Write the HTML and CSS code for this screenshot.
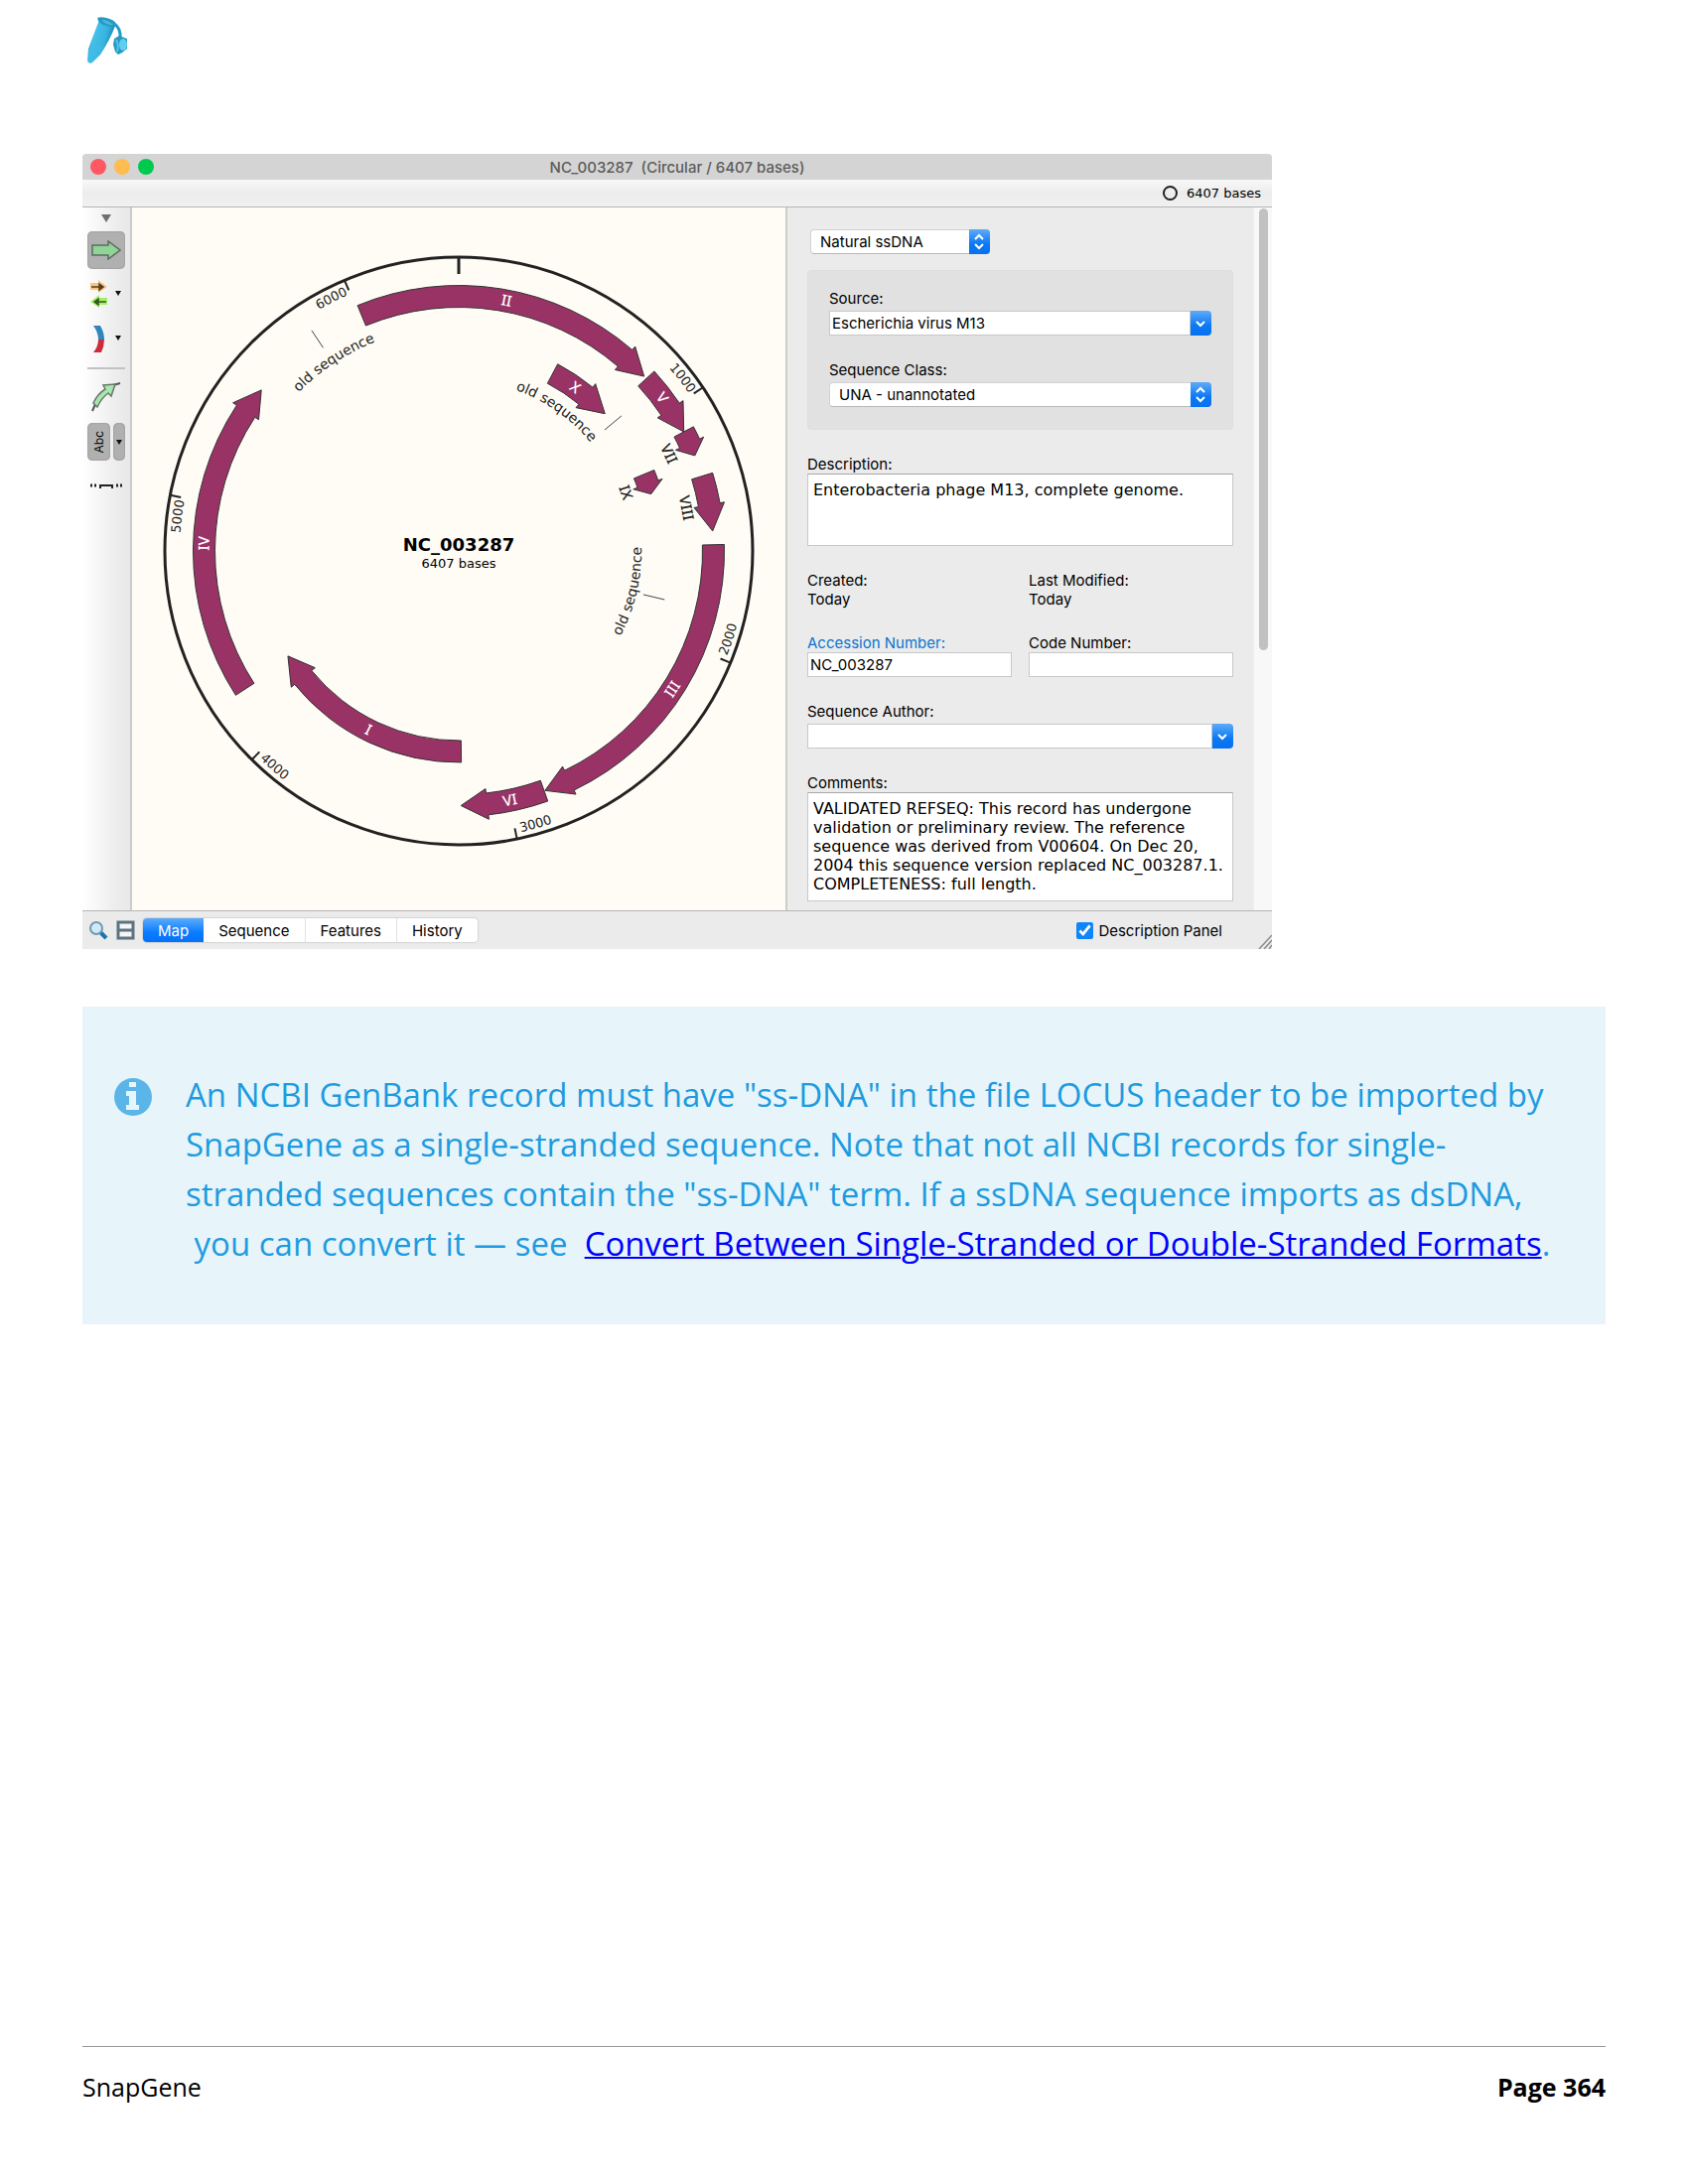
FILE: index.html
```html
<!DOCTYPE html>
<html lang="en">
<head>
<meta charset="utf-8">
<title>SnapGene</title>
<link rel="stylesheet" href="styles.css">
</head>
<body>
<header class="page-head">
  <svg class="logo" width="44" height="50" viewBox="0 0 44 50" aria-hidden="true">
    <defs>
      <linearGradient id="tube" x1="0" y1="0" x2="1" y2="0.4">
        <stop offset="0" stop-color="#1b86ac"/><stop offset="0.35" stop-color="#45c0e8"/><stop offset="0.7" stop-color="#35b2df"/><stop offset="1" stop-color="#167ca3"/>
      </linearGradient>
    </defs>
    <path d="M13 4 L2 33 L1 45 Q2 49 6 47 L14 39 Q24 24 29 10 Z" fill="url(#tube)"/>
    <path d="M4 31 Q9 27 18 31 L14 39 L5 47 Q1 48 2 43 Z" fill="#41bbe4" opacity=".6"/>
    <path d="M11 2 Q17 0 26 4 Q31 7 30 10 Q27 12 20 10 Q12 8 11 2 Z" fill="#2699c0"/>
    <path d="M15 4 Q22 4 27 9 Q20 10 15 4 Z" fill="#43b9e0"/>
    <path d="M28 8 Q35 12 34 23" fill="none" stroke="#239cc6" stroke-width="3"/>
    <path d="M28 23 L33 20 L41 23 V33 L36 37 L32 39 L29 36 L27 29 Z" fill="#259bc4"/>
    <ellipse cx="37" cy="29" rx="4" ry="6" fill="#62cdef"/>
    <path d="M30 24 Q33 30 31 36" fill="none" stroke="#52c4ea" stroke-width="2"/>
  </svg>
</header>

<main class="content">
  <section class="window" aria-label="NC_003287">
    <div class="titlebar">
      <span class="lights"><i class="light red"></i><i class="light amber"></i><i class="light green"></i></span>
      <span class="title">NC_003287&nbsp; (Circular / 6407 bases)</span>
    </div>
    <div class="infobar"><i class="ring"></i><span>6407 bases</span></div>

    <div class="workspace">
      <nav class="tools" aria-label="Map tools">
        <svg class="tools-more" width="10" height="8" viewBox="0 0 10 8"><path d="M0 0H10L5 8Z" fill="#707070"/></svg>
        <button class="tool on" type="button" aria-label="Show features">
          <svg width="30" height="20" viewBox="0 0 30 20"><path d="M1 5H17V1L29 10L17 19V15H1Z" fill="#8fd596" stroke="#5f6a60" stroke-width="1.5"/></svg>
        </button>
        <button class="tool" type="button" aria-label="Show primers">
          <svg width="32" height="30" viewBox="0 0 32 30">
            <path d="M0 3H8V0L17 7L8 13V10H0Z" fill="#fbc47c"/><path d="M1 7H10M9 4L13 7L9 10Z" stroke="#51411f" stroke-width="1.5" fill="#51411f"/>
            <path d="M17 18H9V15L0 22L9 28V25H17Z" fill="#a4f06a"/><path d="M16 22H8M8 19L4 22L8 25Z" stroke="#345a1d" stroke-width="1.5" fill="#345a1d"/>
            <path d="M25 11H31L28 16Z" fill="#111"/>
          </svg>
        </button>
        <button class="tool" type="button" aria-label="Show translations">
          <svg width="32" height="30" viewBox="0 0 32 30">
            <path d="M3 1H10Q14 8 14 15H8Q8 8 3 1Z" fill="#3187bd"/><path d="M14 15Q14 22 11 28H3Q8 22 8 15Z" fill="#cb2d3b"/>
            <path d="M25 11H31L28 16Z" fill="#111"/>
          </svg>
        </button>
        <hr class="tools-line">
        <button class="tool" type="button" aria-label="Show locations">
          <svg width="30" height="30" viewBox="0 0 30 30"><path d="M1 29L4 22M22 3L29 1" stroke="#555" stroke-width="2"/><path d="M2 21Q6 12 14 7L12 3L24 2L20 14L17 11Q10 16 6 25Z" fill="#a9e6ad" stroke="#6a776b" stroke-width="1.5"/></svg>
        </button>
        <div class="tool-pair">
          <button class="tool on label-tool" type="button"><span>Abc</span></button>
          <button class="tool on drop-tool" type="button" aria-label="Label options"><svg width="6" height="5" viewBox="0 0 6 5"><path d="M0 0H6L3 5Z" fill="#111"/></svg></button>
        </div>
        <button class="tool" type="button" aria-label="Fold">
          <svg width="32" height="6" viewBox="0 0 32 6"><path d="M0 2H2M4 2H6M26 2H28M30 2H32" stroke="#222" stroke-width="3"/><path d="M10 5V2H22V5" fill="none" stroke="#222" stroke-width="2"/></svg>
        </button>
      </nav>

      <div class="map">
        <svg id="plasmid" viewBox="-329 -346 658 708" role="img" aria-label="Circular map of NC_003287">
          <circle class="backbone" r="296"/>
          <line class="origin" x1="0" y1="-296" x2="0" y2="-279"/>
          <text class="map-name" x="0" y="0">NC_003287</text>
          <text class="map-size" x="0" y="17">6407 bases</text>
        </svg>
      </div>

      <div class="panel">
        <form class="fields">
          <span class="picker kind">
            <select aria-label="Molecule type"><option>Natural ssDNA</option></select>
            <svg class="cap" viewBox="0 0 21 25"><path d="M6 10L10 6L14 10M6 15L10 19L14 15"/></svg>
          </span>

          <div class="group">
            <div class="field spaced">
              <label for="source">Source:</label>
              <span class="combo"><input id="source" type="text" value="Escherichia virus M13"><button class="cap" type="button" aria-label="Choose source"><svg viewBox="0 0 21 25"><path d="M6 11L10 15L14 11"/></svg></button></span>
            </div>
            <div class="field spaced">
              <label for="class">Sequence Class:</label>
              <span class="picker">
                <select id="class"><option>UNA - unannotated</option></select>
                <svg class="cap" viewBox="0 0 21 25"><path d="M6 10L10 6L14 10M6 15L10 19L14 15"/></svg>
              </span>
            </div>
          </div>

          <div class="field">
            <label for="description">Description:</label>
            <textarea id="description" class="short">Enterobacteria phage M13, complete genome.</textarea>
          </div>

          <div class="pair">
            <div class="field"><span>Created:</span><span>Today</span></div>
            <div class="field"><span>Last Modified:</span><span>Today</span></div>
          </div>

          <div class="pair">
            <div class="field"><label class="linked" for="accession">Accession Number:</label><input id="accession" type="text" value="NC_003287"></div>
            <div class="field"><label for="code">Code Number:</label><input id="code" type="text"></div>
          </div>

          <div class="field spaced">
            <label for="author">Sequence Author:</label>
            <span class="combo"><input id="author" type="text"><button class="cap" type="button" aria-label="Choose author"><svg viewBox="0 0 21 25"><path d="M6 11L10 15L14 11"/></svg></button></span>
          </div>

          <div class="field">
            <label for="comments">Comments:</label>
            <textarea id="comments" class="tall">VALIDATED REFSEQ: This record has undergone
validation or preliminary review. The reference
sequence was derived from V00604. On Dec 20,
2004 this sequence version replaced NC_003287.1.
COMPLETENESS: full length.</textarea>
          </div>
        </form>
        <div class="scroll"><i class="thumb"></i></div>
      </div>
    </div>

    <div class="statusbar">
      <svg width="19" height="20" viewBox="0 0 19 20" aria-hidden="true"><path d="M11 12L17 18" stroke="#1a75ae" stroke-width="4"/><circle cx="7" cy="8" r="6" fill="#cfe9fa" stroke="#7398ae" stroke-width="2"/></svg>
      <svg width="19" height="20" viewBox="0 0 19 20" aria-hidden="true"><path d="M2 2H17V18H2ZM2 10H17" fill="#f4f6f7" stroke="#5d7380" stroke-width="3"/></svg>
      <div class="tabs">
        <button class="tab current" type="button">Map</button><button class="tab" type="button">Sequence</button><button class="tab" type="button">Features</button><button class="tab" type="button">History</button>
      </div>
      <label class="toggle"><input type="checkbox" checked>Description Panel</label>
      <svg class="grip" width="14" height="15" viewBox="0 0 14 15" aria-hidden="true"><path d="M1 15L14 1M6 15L14 6M11 15L14 11" stroke="#8d8d8d" stroke-width="1.5"/></svg>
    </div>
  </section>

  <aside class="note">
    <svg class="note-icon" width="38" height="38" viewBox="0 0 38 38" aria-hidden="true"><circle cx="19" cy="19" r="19" fill="#5bb5e9"/><path d="M15 4H22V9H15ZM12 13H22V27H25V32H12V27H15V18H12Z" fill="#e7f5fa"/></svg>
    <p>An NCBI GenBank record must have "ss-DNA" in the file LOCUS header to be imported by SnapGene as a single-stranded sequence. Note that not all NCBI records for single-stranded sequences contain the "ss-DNA" term. If a ssDNA sequence imports as dsDNA, &nbsp;you can convert it — see &nbsp;<a href="#formats">Convert Between Single-Stranded or Double-Stranded Formats</a>.</p>
  </aside>
</main>

<footer class="page-foot"><span>SnapGene</span><strong>Page 364</strong></footer>
<script src="map.js"></script>
</body>
</html>
```
FILE: styles.css
```css
* { box-sizing: border-box; }

body {
  margin: 0;
  min-height: 100vh;
  padding: 0 83px;
  display: flex;
  flex-direction: column;
  background: #fff;
  color: #000;
  font-family: "Open Sans", sans-serif;
}

.page-head { height: 155px; padding: 16px 4px; }
.logo { display: block; }
.content { flex: 1; }

/* application window */
.window {
  width: 100%;
  max-width: 1198px;
  background: #ebebeb;
  border-radius: 4px 4px 0 0;
  overflow: hidden;
  font: 15px/19px Inter, sans-serif;
}
.window button, .window input, .window select, .window textarea { font: inherit; color: inherit; margin: 0; }

.titlebar {
  display: grid;
  grid-template-columns: 1fr auto 1fr;
  align-items: center;
  height: 26px;
  padding: 0 8px;
  background: #d4d4d4;
  color: #5c5c5c;
  font-weight: 500;
}
.lights { display: flex; gap: 8px; }
.light { width: 16px; height: 16px; border-radius: 50%; }
.red { background: #ff5864; }
.amber { background: #ffbc50; }
.green { background: #00ca4e; }

.infobar {
  display: flex;
  align-items: center;
  justify-content: flex-end;
  gap: 9px;
  height: 28px;
  padding: 0 11px;
  border-bottom: 1px solid #b5b5b5;
  background: linear-gradient(#f9f9f9, #ececec 50%, #f1f1f1);
  font: 13px/19px "DejaVu Sans", sans-serif;
}
.ring { width: 15px; height: 15px; border: 2px solid #222; border-radius: 50%; }

.workspace { display: flex; }

.tools {
  flex: none;
  width: 50px;
  padding: 7px 5px;
  display: flex;
  flex-direction: column;
  align-items: center;
  gap: 7px;
  border-right: 2px solid #ccc;
  background: linear-gradient(90deg, #fff, #ededed 70%, #e8e8e8);
}
.tools-more { margin-bottom: 2px; }
.tool {
  width: 38px;
  height: 38px;
  padding: 0;
  display: flex;
  align-items: center;
  justify-content: center;
  border: 0;
  border-radius: 5px;
  background: none;
}
.tool.on { background: #b0b0b0; box-shadow: inset 0 0 2px #888; }
.tool-pair { display: flex; gap: 3px; }
.tool.label-tool { width: 23px; font-size: 12px; }
.label-tool span { writing-mode: vertical-rl; transform: rotate(180deg); }
.tool.drop-tool { width: 12px; }
.tools-line { width: 38px; height: 2px; margin: 2px 0; border: 0; background: #c2c2c2; }

.map { flex: 1; min-width: 0; display: flex; background: #fffcf5; }
.map svg { width: 100%; height: auto; font-family: "DejaVu Sans", sans-serif; }
.backbone { fill: none; stroke: #222; stroke-width: 3; }
.origin { stroke: #222; stroke-width: 3; }
.tick { stroke: #222; stroke-width: 2; }
.pointer { stroke: #444; stroke-width: 1; }
.feature { fill: #993366; stroke: #333; stroke-width: 1; }
.tick-label { font-size: 13px; fill: #222; }
.site-label { font-size: 14px; fill: #222; }
.numeral { font: 500 15px "Noto Sans", sans-serif; text-anchor: middle; fill: #222; }
.numeral.light-text { fill: #fff; }
.map-name { font-size: 18px; font-weight: 700; text-anchor: middle; }
.map-size { font-size: 13px; text-anchor: middle; }

.panel { flex: 0 0 490px; display: flex; border-left: 2px solid #ccc; }
.fields {
  flex: 1;
  min-width: 0;
  padding: 22px 20px 9px 20px;
  display: flex;
  flex-direction: column;
  gap: 25px;
}
.field { display: flex; flex-direction: column; }
.field.spaced { gap: 3px; }
.linked { color: #0a74d0; }
.group {
  margin-top: -9px;
  padding: 18px 21px 22px;
  display: flex;
  flex-direction: column;
  gap: 25px;
  border: 1px solid #dedede;
  border-radius: 4px;
  background: #e1e1e1;
}
.pair { display: grid; grid-template-columns: 1fr 1fr; gap: 17px; }

.fields input, .fields textarea {
  width: 100%;
  border: 1px solid #c8c8c8;
  border-radius: 0;
  background: #fff;
}
.fields input { height: 25px; padding: 0 2px; }
.fields textarea {
  display: block;
  padding: 6px 5px;
  border-top-color: #a8a8a8;
  resize: none;
  overflow: hidden;
  white-space: pre-wrap;
  font: 16px/19px "DejaVu Sans", sans-serif;
}
.fields .short { height: 73px; }
.fields .tall { height: 110px; }

.picker { display: grid; grid-template-columns: 1fr 21px; }
.picker.kind { width: 181px; margin-left: 3px; }
.picker select {
  grid-area: 1 / 1 / 2 / 3;
  height: 25px;
  padding: 0 9px;
  appearance: none;
  border: 1px solid #d2d2d2;
  border-bottom-color: #b8b8b8;
  border-radius: 4px;
  background: #fff;
}
.picker .cap { grid-area: 1 / 2; pointer-events: none; }
.combo { display: flex; }
.cap {
  flex: none;
  width: 21px;
  height: 25px;
  padding: 0;
  border: 0;
  border-radius: 0 4px 4px 0;
  background: linear-gradient(#5fabf7, #0a78f5 60%, #0870ee);
}
.cap svg { display: block; }
.cap path { fill: none; stroke: #fff; stroke-width: 2; }

.scroll { flex: none; width: 19px; padding: 1px 5px; background: #f8f8f8; border-left: 1px solid #efefef; }
.thumb { display: block; width: 9px; height: 63%; border-radius: 5px; background: #c1c1c1; }

.statusbar {
  display: flex;
  align-items: center;
  gap: 8px;
  height: 39px;
  padding-left: 7px;
  border-top: 1px solid #b5b5b5;
}
.tabs { display: flex; border-radius: 4px; box-shadow: 0 0 1px 1px #d4d4d4; background: #fff; }
.tab { height: 24px; padding: 0 15px; border: 0; border-right: 1px solid #e2e2e2; background: none; }
.tab:last-child { border: 0; }
.tab.current { border: 0; border-radius: 4px 0 0 4px; background: linear-gradient(#5cabfa, #0a7bff 60%, #0572f8); }
.window .tab.current { color: #fff; }
.toggle { display: flex; align-items: center; gap: 5px; margin-left: auto; margin-right: 28px; }
.toggle input {
  width: 17px;
  height: 17px;
  accent-color: #0f85f8;
}
.grip { align-self: flex-end; }

/* note below the figure */
.note {
  display: flex;
  gap: 34px;
  margin-top: 58px;
  padding: 64px 32px 56px;
  background: #e7f5fa;
  color: #1e9be0;
  font-size: 33px;
  line-height: 50px;
}
.note-icon { flex: none; margin-top: 8px; }
.note p { margin: 0; }
.note a { color: #00f; text-decoration-thickness: 2px; }

.page-foot {
  display: flex;
  justify-content: space-between;
  height: 139px;
  padding-top: 23px;
  border-top: 1px solid #999;
  font-size: 25px;
  line-height: 34px;
}
```
FILE: map.js
```js
// Draws the circular map: features, scale ticks and curved labels.
// Angles are in degrees, clockwise from the top of the circle.
(function () {
  var svg = document.getElementById('plasmid');
  var NS = 'http://www.w3.org/2000/svg';
  var LENGTH = 6407, OUTER = 256.5, INNER = 202;

  function pt(r, deg) {
    var a = deg * Math.PI / 180;
    return (r * Math.sin(a)).toFixed(2) + ' ' + (-r * Math.cos(a)).toFixed(2);
  }
  function add(name, attrs, text) {
    var el = document.createElementNS(NS, name);
    for (var k in attrs) el.setAttribute(k, attrs[k]);
    if (text) el.textContent = text;
    svg.appendChild(el);
    return el;
  }
  function arc(r, to, sweep) { return 'A' + r + ' ' + r + ' 0 0 ' + sweep + ' ' + pt(r, to); }

  function feature(r, from, to) {
    var head = Math.min(26.5 / r * 57.3, (to - from) / 2);
    var neck = to - head;
    add('path', { 'class': 'feature', d:
      'M' + pt(r + 11, from) + arc(r + 11, neck, 1) + 'L' + pt(r + 15.5, neck) +
      'L' + pt(r, to) + 'L' + pt(r - 15.5, neck) + 'L' + pt(r - 11, neck) +
      arc(r - 11, from, 0) + 'Z' });
  }
  function numeral(text, r, deg, inside) {
    var flip = deg > 90 && deg < 270;
    add('text', {
      'class': 'numeral' + (inside ? ' light-text' : ''),
      y: 5,
      transform: 'translate(' + pt(r, deg).replace(' ', ',') + ') rotate(' + (flip ? deg + 180 : deg) + ')'
    }, text);
  }
  var count = 0;
  function curved(text, cls, r, from, to, anchor) {
    var id = 'arc' + (++count);
    add('path', { id: id, fill: 'none', d: 'M' + pt(r, from) + arc(r, to, to > from ? 1 : 0) });
    var t = add('text', { 'class': cls, 'text-anchor': anchor });
    var p = document.createElementNS(NS, 'textPath');
    p.setAttribute('href', '#' + id);
    p.setAttribute('startOffset', { start: '0%', middle: '50%', end: '100%' }[anchor]);
    p.textContent = text;
    t.appendChild(p);
  }
  function radial(cls, r1, r2, deg) {
    add('path', { 'class': cls, d: 'M' + pt(r1, deg) + 'L' + pt(r2, deg) });
  }

  [
    ['II', OUTER, -22.4, 46.7, 10.8], ['V', OUTER, 47.4, 62.1, 53], ['VII', OUTER, 62.1, 68],
    ['VIII', OUTER, 72.9, 85.5], ['III', OUTER, 88.6, 160.2, 122.9], ['VI', OUTER, 160.4, 179.5, 168.4],
    ['IV', OUTER, 237.1, 309.2, 271.7], ['I', INNER, 179.3, 238.4, 206.8], ['X', INNER, 27.9, 46.8, 35.4],
    ['IX', INNER, 67.5, 73.5]
  ].forEach(function (f) {
    feature(f[1], f[2], f[3]);
    if (f[4] !== undefined) numeral(f[0], f[1], f[4], true);
  });
  numeral('VII', 233, 65.2);
  numeral('VIII', 233, 79.3);
  numeral('IX', 178, 70.7);

  for (var n = 1000; n < LENGTH; n += 1000) {
    var deg = n / LENGTH * 360;
    radial('tick', 296, 285, deg);
    if (deg > 90 && deg < 270) curved(String(n), 'tick-label', 290, deg - 1, deg - 20, 'start');
    else curved(String(n), 'tick-label', 281, deg - 20, deg - 0.5, 'end');
  }

  radial('pointer', 267, 246, -33.7);
  radial('pointer', 213, 191, 50.3);
  radial('pointer', 213, 191, 103.3);
  curved('old sequence', 'site-label', 227, -63.5, -3.5, 'middle');
  curved('old sequence', 'site-label', 172, 5, 65, 'middle');
  curved('old sequence', 'site-label', 184, 133.3, 73.3, 'middle');
})();
```
